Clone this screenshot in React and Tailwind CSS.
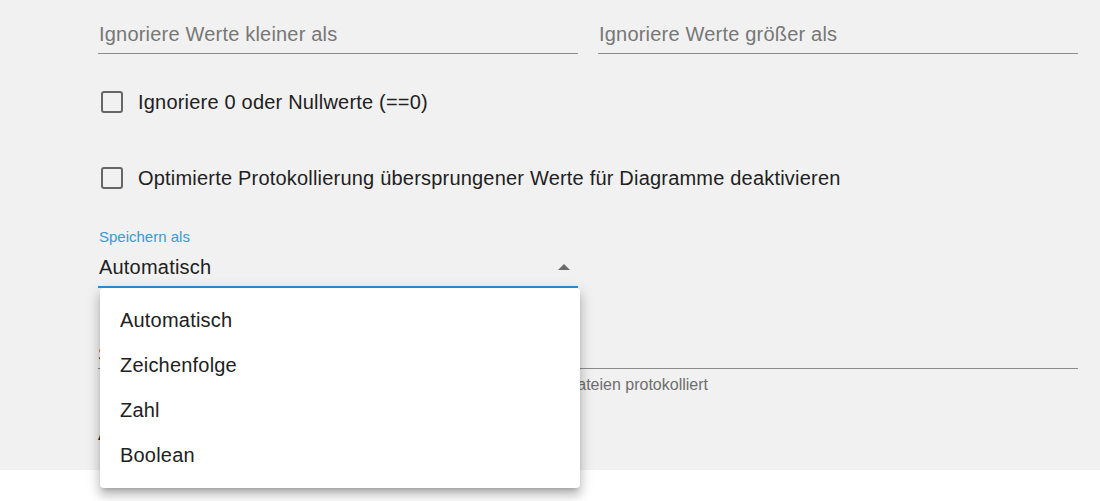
import { useState } from 'react';

const font = "font-['Liberation_Sans','Arial',sans-serif]";

const Checkbox = ({ label }) => (
  <label className="flex items-center h-12 cursor-pointer">
    <span className="ml-[3px] w-[22px] h-[22px] rounded-[3px] border-[2.5px] border-[#666] shrink-0" />
    <span className="ml-[15px] text-[20px] tracking-[0.2px] text-[#212121] leading-6">{label}</span>
  </label>
);

const TextField = ({ placeholder }) => (
  <div className="flex-1 border-b border-[#8c8c8c] pt-[22px] pb-[7px]">
    <span className="block pl-px text-[20px] tracking-[0.2px] leading-6 text-[#777]">{placeholder}</span>
  </div>
);

const App = () => {
  const [value] = useState('Automatisch');
  const options = ['Automatisch', 'Zeichenfolge', 'Zahl', 'Boolean'];

  return (
    <div className={`${font} w-[1100px] h-[501px] bg-white relative overflow-hidden`}>
      <div className="h-[470px] bg-[#f1f1f1] pl-[98px] pr-[22px]">
        {/* Value filters */}
        <div className="flex gap-5">
          <TextField placeholder="Ignoriere Werte kleiner als" />
          <TextField placeholder="Ignoriere Werte größer als" />
        </div>

        <div className="mt-6">
          <Checkbox label="Ignoriere 0 oder Nullwerte (==0)" />
        </div>
        <div className="mt-7">
          <Checkbox label="Optimierte Protokollierung übersprungener Werte für Diagramme deaktivieren" />
        </div>

        {/* Storage type select */}
        <div className="mt-[26px] w-[480px] relative">
          <div className="pl-px text-[15px] leading-[18px] text-[#3b99d4]">Speichern als</div>
          <div className="mt-[9px] pb-[7px] border-b-2 border-[#2f8fcf] flex items-center justify-between">
            <span className="pl-px text-[20px] tracking-[0.2px] leading-6 text-[#212121]">{value}</span>
            <svg width="12" height="6" viewBox="0 0 12 6" className="mr-[8px]">
              <polygon points="0,6 6,0 12,6" fill="#6b6b6b" />
            </svg>
          </div>

          {/* Open menu */}
          <ul className="absolute left-[2px] top-full w-[480px] bg-white rounded-[4px] pt-[9px] pb-[11px] z-10 shadow-[0px_5px_5px_-3px_rgba(0,0,0,0.2),0px_8px_10px_1px_rgba(0,0,0,0.14),0px_3px_14px_2px_rgba(0,0,0,0.12)]">
            {options.map((opt) => (
              <li key={opt} className="h-[45px] flex items-center px-5 text-[20px] tracking-[0.2px] text-[#212121]">
                {opt}
              </li>
            ))}
          </ul>
        </div>

        {/* Field hidden behind the menu */}
        <div className="mt-[54px] border-b border-[#8c8c8c] pb-[2px]">
          <span className="block text-[20px] leading-6 text-[#212121]">Standard</span>
        </div>
        <div className="mt-[6px] w-[610px] text-right text-[16px] leading-5 text-[#6e6e6e]">
          Nur geänderte Werte werden in die Dateien protokolliert
        </div>
        <div className="mt-[26px] text-[20px] leading-6 text-[#212121]">Aufbewahrung</div>
      </div>
    </div>
  );
};

export default App;
